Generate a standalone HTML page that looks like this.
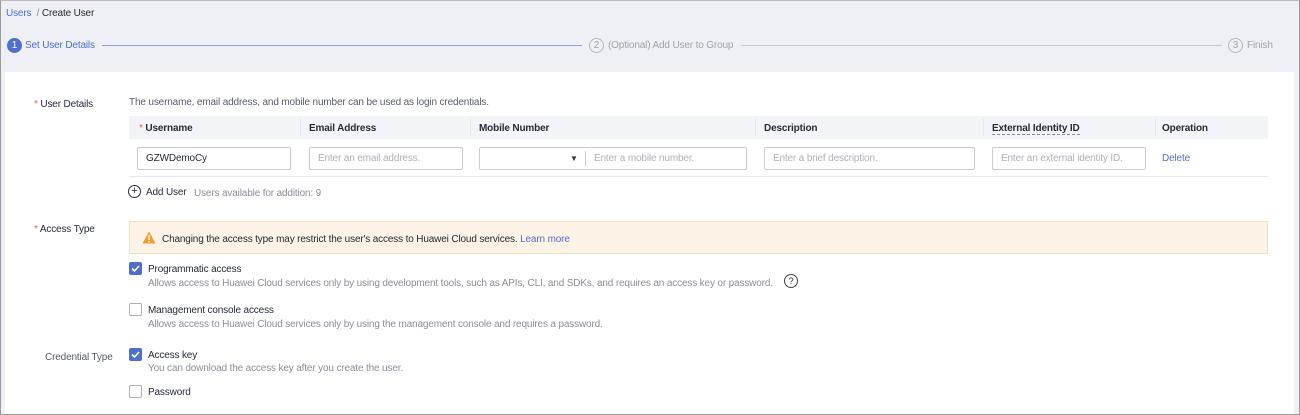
<!DOCTYPE html>
<html><head><meta charset="utf-8"><style>
*{margin:0;padding:0;box-sizing:border-box}
body{width:1300px;height:415px;overflow:hidden;background:#eef0f5;font-family:"Liberation Sans",Arial,sans-serif;font-size:10px;letter-spacing:-0.15px;color:#252b3a;position:relative}
.a{position:absolute;white-space:nowrap;line-height:12px;margin-top:2px}
.c{margin-top:0}
.frame{position:absolute;left:0;top:0;width:1300px;height:415px;border:1px solid #9a9a9a;border-top-color:#bbb;pointer-events:none}
.panel{position:absolute;left:5px;top:72px;width:1289px;height:342px;background:#fff}
.g{color:#8a8e99}
.blue{color:#526ecc}
.star{color:#e6633d}
.line{position:absolute;height:1px}
.inp{position:absolute;height:23px;border:1px solid #c9ccd3;border-radius:2px;background:#fff;padding-left:8px;line-height:22px;color:#adb0b8;font-size:10px}
.cb{position:absolute;width:13px;height:13px;border:1px solid #adb0b8;border-radius:2px;background:#fff}
.cb.on{background:#526ecc;border-color:#526ecc}
.b{font-weight:bold}
</style></head><body>
<div class="a blue" style="left:6px;top:6px">Users <span style="color:#8a8e99">&nbsp;/&nbsp;</span><span style="color:#252b3a">Create User</span></div>
<div class="a c" style="left:7px;top:38px;width:15px;height:15px;border-radius:50%;background:#526ecc;color:#fff;text-align:center;line-height:15px;font-size:10px">1</div>
<div class="a blue" style="left:25px;top:38px">Set User Details</div>
<div class="line" style="left:102px;top:45px;width:480px;background:#8ea0de"></div>
<div class="a c" style="left:589px;top:38px;width:15px;height:15px;border-radius:50%;border:1px solid #b5b8c0;color:#a0a3ab;text-align:center;line-height:13px">2</div>
<div class="a" style="left:608px;top:38px;color:#a0a3ab">(Optional) Add User to Group</div>
<div class="line" style="left:741px;top:45px;width:481px;background:#c8cad0"></div>
<div class="a c" style="left:1228px;top:38px;width:15px;height:15px;border-radius:50%;border:1px solid #b5b8c0;color:#a0a3ab;text-align:center;line-height:13px">3</div>
<div class="a" style="left:1247px;top:38px;color:#a0a3ab">Finish</div>

<div class="panel"></div>
<div class="a" style="left:34px;top:97px"><span class="star">*</span> User Details</div>
<div class="a" style="left:129px;top:95px;color:#575d6c">The username, email address, and mobile number can be used as login credentials.</div>
<div style="position:absolute;left:129px;top:116px;width:1139px;height:23px;background:#f2f4f8"></div>
<div class="line" style="left:300px;top:118px;width:1px;height:19px;background:#e6e8ee"></div>
<div class="line" style="left:470px;top:118px;width:1px;height:19px;background:#e6e8ee"></div>
<div class="line" style="left:755px;top:118px;width:1px;height:19px;background:#e6e8ee"></div>
<div class="line" style="left:983px;top:118px;width:1px;height:19px;background:#e6e8ee"></div>
<div class="line" style="left:1155px;top:118px;width:1px;height:19px;background:#e6e8ee"></div>
<div class="a b" style="left:139px;top:121px"><span class="star" style="font-weight:normal">*</span> Username</div>
<div class="a b" style="left:309px;top:121px">Email Address</div>
<div class="a b" style="left:479px;top:121px">Mobile Number</div>
<div class="a b" style="left:764px;top:121px">Description</div>
<div class="a b" style="left:992px;top:121px;border-bottom:1px dashed #8a8e99;line-height:11px">External Identity ID</div>
<div class="a b" style="left:1162px;top:121px">Operation</div>
<div class="inp" style="left:137px;top:147px;width:154px;color:#252b3a">GZWDemoCy</div>
<div class="inp" style="left:309px;top:147px;width:154px">Enter an email address.</div>
<div class="inp" style="left:479px;top:147px;width:268px;padding-left:114px">Enter a mobile number.</div>
<div class="a" style="left:570px;top:151px;font-size:8px;color:#333">▼</div>
<div class="line" style="left:585px;top:151px;width:1px;height:15px;background:#c9ccd3"></div>
<div class="inp" style="left:764px;top:147px;width:211px">Enter a brief description.</div>
<div class="inp" style="left:992px;top:147px;width:154px">Enter an external identity ID.</div>
<div class="a blue" style="left:1162px;top:151px">Delete</div>
<div class="line" style="left:129px;top:176px;width:1139px;background:#e6e8ee"></div>
<div class="a c" style="left:128px;top:185px;width:13px;height:13px;border:1px solid #252b3a;border-radius:50%;text-align:center;line-height:10px;font-size:11px">+</div>
<div class="a" style="left:146px;top:185px">Add User</div>
<div class="a g" style="left:194px;top:186px">Users available for addition: 9</div>

<div class="a" style="left:34px;top:222px"><span class="star">*</span> Access Type</div>
<div style="position:absolute;left:129px;top:221px;width:1139px;height:33px;background:#fcf2e6;border:1px solid #f3dfc1"></div>
<svg style="position:absolute;left:142px;top:231px" width="14" height="13" viewBox="0 0 14 13"><path d="M7 0.5L13.5 12.5H0.5Z" fill="#f09a30"/><rect x="6.3" y="4" width="1.4" height="5" fill="#fff"/><rect x="6.3" y="10" width="1.4" height="1.4" fill="#fff"/></svg>
<div class="a" style="left:162px;top:232px">Changing the access type may restrict the user's access to Huawei Cloud services. <span class="blue">Learn more</span></div>

<div class="cb on" style="left:129px;top:262px"></div>
<svg style="position:absolute;left:129px;top:262px" width="13" height="13"><path d="M3 6.5L5.5 9L10 4" stroke="#fff" stroke-width="1.6" fill="none"/></svg>
<div class="a" style="left:148px;top:262px">Programmatic access</div>
<div class="a g" style="left:148px;top:276px">Allows access to Huawei Cloud services only by using development tools, such as APIs, CLI, and SDKs, and requires an access key or password.</div>
<div class="a c" style="left:784px;top:274px;width:14px;height:14px;border:1px solid #444;border-radius:50%;text-align:center;line-height:12px;font-size:9px">?</div>

<div class="cb" style="left:129px;top:303px"></div>
<div class="a" style="left:148px;top:303px">Management console access</div>
<div class="a g" style="left:148px;top:317px">Allows access to Huawei Cloud services only by using the management console and requires a password.</div>

<div class="a" style="left:45px;top:350px;color:#575d6c">Credential Type</div>
<div class="cb on" style="left:129px;top:348px"></div>
<svg style="position:absolute;left:129px;top:348px" width="13" height="13"><path d="M3 6.5L5.5 9L10 4" stroke="#fff" stroke-width="1.6" fill="none"/></svg>
<div class="a" style="left:148px;top:348px">Access key</div>
<div class="a g" style="left:148px;top:361px">You can download the access key after you create the user.</div>
<div class="cb" style="left:129px;top:385px"></div>
<div class="a" style="left:148px;top:385px">Password</div>
<div class="frame"></div>
</body></html>
